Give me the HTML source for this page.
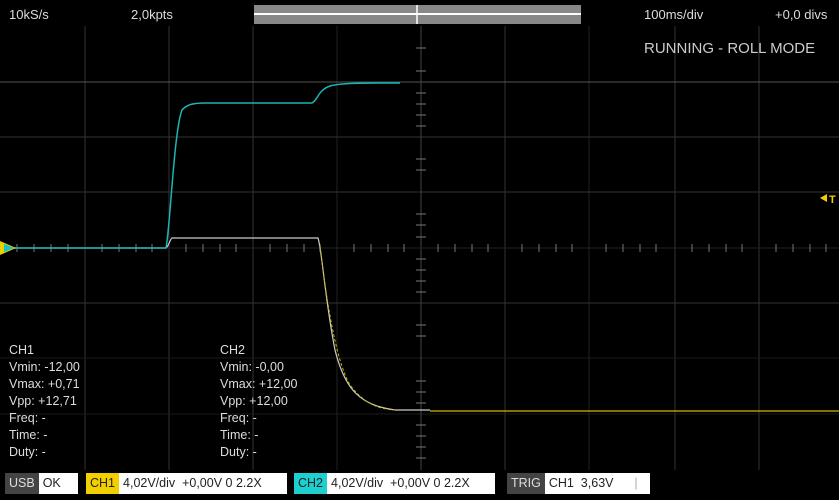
<!DOCTYPE html>
<html><head><style>
body{margin:0;background:#000;width:839px;height:500px;overflow:hidden;position:relative;font-family:"Liberation Sans",sans-serif;color:#ddd}
.t{position:absolute;font-size:13px;white-space:nowrap}
.m{position:absolute;font-size:12.5px;line-height:17px;color:#ddd}
.bb{position:absolute;top:473px;height:21px;background:#fff;color:#222;font-size:12.5px;line-height:21px;white-space:nowrap}
.bb span{display:inline-block;padding:0 4px;height:21px}
</style></head><body>
<svg width="839" height="500" style="position:absolute;left:0;top:0">
<g stroke="#333" stroke-width="1">
<line x1="85" y1="26" x2="85" y2="470"/><line x1="169" y1="26" x2="169" y2="470"/><line x1="253" y1="26" x2="253" y2="470"/><line x1="337" y1="26" x2="337" y2="470" stroke="#222"/><line x1="505" y1="26" x2="505" y2="470"/><line x1="589" y1="26" x2="589" y2="470" stroke="#222"/><line x1="675" y1="26" x2="675" y2="470"/><line x1="759" y1="26" x2="759" y2="470"/>
<line x1="0" y1="82" x2="839" y2="82" stroke="#555"/><line x1="0" y1="137" x2="839" y2="137"/><line x1="0" y1="192" x2="839" y2="192"/><line x1="0" y1="303" x2="839" y2="303"/><line x1="0" y1="358" x2="839" y2="358" stroke="#1a1a1a"/><line x1="0" y1="414" x2="839" y2="414" stroke="#1a1a1a"/>
<line x1="421" y1="26" x2="421" y2="470" stroke="#444"/>
<line x1="0" y1="248" x2="839" y2="248" stroke="#222"/>
</g>
<g stroke="#777" stroke-width="1">
<path d="M17 244v8M34 244v8M51 244v8M68 244v8M102 244v8M119 244v8M136 244v8M152 244v8M186 244v8M203 244v8M220 244v8M236 244v8M270 244v8M287 244v8M304 244v8M320 244v8M354 244v8M371 244v8M388 244v8M404 244v8M438 244v8M455 244v8M472 244v8M488 244v8M522 244v8M539 244v8M556 244v8M572 244v8M606 244v8M623 244v8M640 244v8M656 244v8M692 244v8M709 244v8M726 244v8M742 244v8M776 244v8M793 244v8M810 244v8M826 244v8"/>
<path d="M416 48h10M416 71h10M416 93h10M416 104h10M416 115h10M416 126h10M416 159h10M416 170h10M416 214h10M416 225h10M416 237h10M416 259h10M416 270h10M416 281h10M416 292h10M416 325h10M416 336h10M416 381h10M416 392h10M416 403h10M416 425h10M416 436h10M416 447h10M416 458h10"/>
</g>
<path d="M0 248H166C169 246 170 239 172 238H318C322 250 325 300 335 350C345 390 360 405 395 410H430" stroke="#ccc" fill="none" stroke-width="1.2"/>
<path d="M320 245C325 290 335 360 350 385C365 405 380 409 395 410" stroke="#c8b400" fill="none" stroke-width="1" stroke-dasharray="3 2"/>
<path d="M430 411H839" stroke="#d4b800" stroke-width="1.3"/>
<path d="M10 248H166C170 230 174 130 182 110C187 104 195 103 205 103H312C318 100 318 90 330 86C340 83 360 83 400 83" stroke="#1bb5b5" fill="none" stroke-width="1.5"/>
<polygon points="0,241 16,248 0,255" fill="#e6d000"/>
<polygon points="4,244 14,248 4,252" fill="#18c0c8"/>
<polygon points="820,198 827,194 827,202" fill="#f0d000"/>
<text x="829" y="203" fill="#f0d000" font-size="11" font-weight="bold" font-family="Liberation Sans">T</text>
<rect x="254" y="5" width="327" height="19" fill="#888"/>
<line x1="254" y1="14" x2="581" y2="14" stroke="#fff" stroke-width="2"/>
<line x1="417" y1="5" x2="417" y2="24" stroke="#fff" stroke-width="1.5"/>
</svg>
<div class="t" style="left:9px;top:7px">10kS/s</div>
<div class="t" style="left:131px;top:7px">2,0kpts</div>
<div class="t" style="left:644px;top:7px">100ms/div</div>
<div class="t" style="left:775px;top:7px">+0,0 divs</div>
<div class="t" style="left:644px;top:40px;font-size:15px;color:#ccc">RUNNING - ROLL MODE</div>
<div class="m" style="left:9px;top:342px">CH1<br>Vmin: -12,00<br>Vmax: +0,71<br>Vpp: +12,71<br>Freq: -<br>Time: -<br>Duty: -</div>
<div class="m" style="left:220px;top:342px">CH2<br>Vmin: -0,00<br>Vmax: +12,00<br>Vpp: +12,00<br>Freq: -<br>Time: -<br>Duty: -</div>
<div class="bb" style="left:5px;width:73px"><span style="background:#444;color:#ddd">USB</span><span>OK</span></div>
<div class="bb" style="left:86px;width:201px"><span style="background:#f2d000">CH1</span><span>4,02V/div&nbsp; +0,00V 0 2.2X</span></div>
<div class="bb" style="left:294px;width:201px"><span style="background:#1ecfcf">CH2</span><span>4,02V/div&nbsp; +0,00V 0 2.2X</span></div>
<div class="bb" style="left:507px;width:143px"><span style="background:#444;color:#ddd">TRIG</span><span>CH1&nbsp; 3,63V&nbsp;&nbsp;&nbsp;&nbsp;&nbsp; <span style="padding:0;color:#aaa">|</span></span></div>
</body></html>
